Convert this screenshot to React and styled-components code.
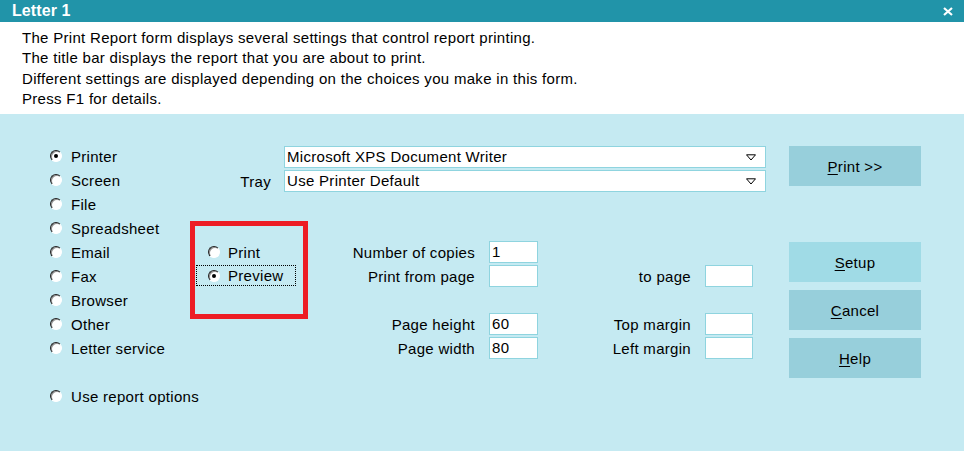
import React from "react";
import styled, { createGlobalStyle } from "styled-components";

const GlobalStyle = createGlobalStyle`
  html, body {
    margin: 0;
    padding: 0;
    background: #c5eaf2;
  }
  body {
    font-family: "Liberation Sans", Arial, sans-serif;
    font-size: 15px;
    letter-spacing: 0.3px;
    color: #000;
  }
`;

const outputs = [
  { label: "Printer", checked: true },
  { label: "Screen" },
  { label: "File" },
  { label: "Spreadsheet" },
  { label: "Email" },
  { label: "Fax" },
  { label: "Browser" },
  { label: "Other" },
  { label: "Letter service" },
];

function App() {
  return (
    <>
      <GlobalStyle />
      <Window>
        <TitleBar>
          <Title>Letter 1</Title>
          <Close aria-label="close">
            <svg width="10" height="9" viewBox="0 0 10 9">
              <path d="M1 1 L9 8 M9 1 L1 8" stroke="#fff" strokeWidth="2.2" />
            </svg>
          </Close>
        </TitleBar>
        <Info>
          <p>The Print Report form displays several settings that control report printing.</p>
          <p>The title bar displays the report that you are about to print.</p>
          <p>Different settings are displayed depending on the choices you make in this form.</p>
          <p>Press F1 for details.</p>
        </Info>
        <Main>
          <LeftCol>
            {outputs.map((o) => (
              <RadioRow key={o.label}>
                <Radio $checked={o.checked} />
                {o.label}
              </RadioRow>
            ))}
            <RadioRow $gap>
              <Radio />
              Use report options
            </RadioRow>
          </LeftCol>

          <Center>
            <DropRow>
              <DropLabel />
              <Select>
                Microsoft XPS Document Writer
                <Arrow />
              </Select>
            </DropRow>
            <DropRow>
              <DropLabel>Tray</DropLabel>
              <Select>
                Use Printer Default
                <Arrow />
              </Select>
            </DropRow>

            <Lower>
              <RedBox>
                <ModeRow>
                  <Radio />
                  Print
                </ModeRow>
                <ModeRow $focus>
                  <Radio $checked />
                  Preview
                </ModeRow>
              </RedBox>
              <Fields>
                <FieldLabel>Number of copies</FieldLabel>
                <Input>1</Input>
                <FieldLabel />
                <span />
                <FieldLabel>Print from page</FieldLabel>
                <Input />
                <FieldLabel>to page</FieldLabel>
                <Input />
                <Spacer />
                <FieldLabel>Page height</FieldLabel>
                <Input>60</Input>
                <FieldLabel>Top margin</FieldLabel>
                <Input />
                <FieldLabel>Page width</FieldLabel>
                <Input>80</Input>
                <FieldLabel>Left margin</FieldLabel>
                <Input />
              </Fields>
            </Lower>
          </Center>

          <Buttons>
            <Button>
              <u>P</u>rint &gt;&gt;
            </Button>
            <Button $light $top={56}>
              <u>S</u>etup
            </Button>
            <Button $top={8}>
              <u>C</u>ancel
            </Button>
            <Button $top={8}>
              <u>H</u>elp
            </Button>
          </Buttons>
        </Main>
      </Window>
    </>
  );
}

function Arrow() {
  return (
    <ArrowIcon width="10" height="7" viewBox="0 0 10 7">
      <path d="M0.5 0.8 H9.5 L5 6 Z" fill="none" stroke="#000" strokeWidth="1" />
    </ArrowIcon>
  );
}

export default App;

const Window = styled.div`
  width: 964px;
  height: 451px;
  display: flex;
  flex-direction: column;
  background: #c5eaf2;
  overflow: hidden;
`;

const TitleBar = styled.div`
  height: 22px;
  background: #2194a9;
  display: flex;
  align-items: center;
  justify-content: space-between;
  padding: 0 12px;
`;

const Title = styled.div`
  color: #fff;
  font-size: 16px;
  font-weight: bold;
  letter-spacing: 0.1px;
`;

const Close = styled.div`
  display: flex;
  align-items: center;
  margin-right: -1px;
`;

const Info = styled.div`
  background: #fff;
  padding: 6px 22px 5px;

  p {
    margin: 0;
    line-height: 20.3px;
  }
`;

const Main = styled.div`
  flex: 1;
  display: flex;
  padding: 32px 0 0 50px;
`;

const LeftCol = styled.div`
  width: 140px;
  margin-top: -2px;
  display: flex;
  flex-direction: column;
`;

const RadioRow = styled.div`
  height: 24px;
  display: flex;
  align-items: center;
  margin-top: ${(p) => (p.$gap ? "24px" : "0")};
  white-space: nowrap;
`;

const Radio = styled.span`
  position: relative;
  flex: none;
  width: 10px;
  height: 10px;
  margin-right: 9px;
  border-radius: 50%;
  background: #fff;
  border: 1px solid;
  border-color: #202020 #fff #fff #202020;
  box-shadow: inset 1px 1px 0 #909090;

  &::after {
    content: "";
    display: ${(p) => (p.$checked ? "block" : "none")};
    position: absolute;
    left: 3px;
    top: 3px;
    width: 4px;
    height: 4px;
    border-radius: 50%;
    background: #000;
  }
`;

const Center = styled.div`
  width: 581px;
  display: flex;
  flex-direction: column;
`;

const DropRow = styled.div`
  display: flex;
  align-items: center;
  height: 22px;
  margin-bottom: 2px;
`;

const DropLabel = styled.div`
  width: 81px;
  padding-right: 13px;
  text-align: right;
`;

const Select = styled.div`
  position: relative;
  width: 478px;
  height: 20px;
  line-height: 20px;
  border: 1px solid #8fd4df;
  background: #fff;
  padding-left: 2px;
`;

const ArrowIcon = styled.svg`
  position: absolute;
  right: 9px;
  top: 7px;
`;

const Lower = styled.div`
  display: flex;
  margin-top: 27px;
`;

const RedBox = styled.div`
  width: 108px;
  height: 74px;
  border: 5px solid #ed1c24;
  display: flex;
  flex-direction: column;
  padding-top: 14px;
  box-sizing: content-box;
`;

const ModeRow = styled.div`
  display: flex;
  align-items: center;
  height: ${(p) => (p.$focus ? "21px" : "24px")};
  width: ${(p) => (p.$focus ? "100px" : "auto")};
  margin-left: 1px;
  padding-left: ${(p) => (p.$focus ? "11px" : "12px")};
  border: ${(p) => (p.$focus ? "1px dotted #000" : "none")};
  box-sizing: border-box;
  margin-top: ${(p) => (p.$focus ? "1px" : "0")};
  & > span {
    margin-right: 8px;
  }
`;

const Fields = styled.div`
  display: grid;
  grid-template-columns: 167px 49px 139px 48px;
  grid-auto-rows: 22px;
  column-gap: 14px;
  row-gap: 2px;
  margin-top: 20px;
  align-items: center;
`;

const FieldLabel = styled.div`
  text-align: right;
  white-space: nowrap;
  padding-top: 1px;
`;

const Input = styled.div`
  height: 20px;
  line-height: 20px;
  border: 1px solid #8fd4df;
  background: #fff;
  padding-left: 2px;
`;

const Spacer = styled.div`
  grid-column: 1 / -1;
  height: 0;
  margin-top: -2px;
`;

const Buttons = styled.div`
  display: flex;
  flex-direction: column;
  margin-left: 18px;
`;

const Button = styled.button`
  width: 132px;
  height: 40px;
  margin-top: ${(p) => p.$top || 0}px;
  border: none;
  background: ${(p) => (p.$light ? "#a0dbe6" : "#97cfdb")};
  font-family: "Liberation Sans", Arial, sans-serif;
  font-size: 15px;
  letter-spacing: 0.3px;
  color: #000;
  padding: 0;
  cursor: pointer;

  u {
    text-decoration-thickness: 1px;
    text-underline-offset: 2px;
  }
`;
